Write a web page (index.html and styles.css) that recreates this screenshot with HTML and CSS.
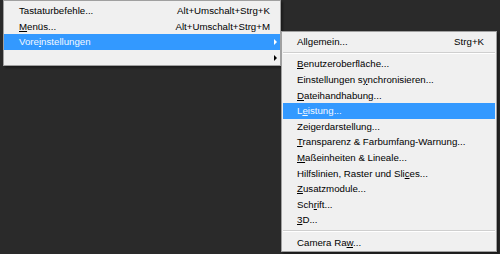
FILE: index.html
```html
<!DOCTYPE html>
<html lang="de">
<head>
<meta charset="utf-8">
<link rel="stylesheet" href="styles.css">
</head>
<body>
<div class="desk">
  <div class="menu main">
    <div class="item"><span class="label">Tastaturbefehle...</span><span class="key">Alt+Umschalt+Strg+K</span><span class="sub"></span></div>
    <div class="item"><span class="label"><u>M</u>enüs...</span><span class="key">Alt+Umschalt+Strg+M</span><span class="sub"></span></div>
    <div class="item active"><span class="label">Vore<u>i</u>nstellungen</span><span class="key"></span><span class="sub"><i class="arrow"></i></span></div>
    <div class="item"><span class="label"></span><span class="key"></span><span class="sub"><i class="arrow"></i></span></div>
  </div>
  <div class="menu flyout">
    <div class="item"><span class="label">Allgemein...</span><span class="key">Strg+K</span></div>
    <div class="sep"></div>
    <div class="item"><span class="label"><u>B</u>enutzeroberfläche...</span></div>
    <div class="item"><span class="label">Einstellungen s<u>y</u>nchronisieren...</span></div>
    <div class="item"><span class="label"><u>D</u>ateihandhabung...</span></div>
    <div class="item active"><span class="label">L<u>e</u>istung...</span></div>
    <div class="item"><span class="label">Zeigerdarstellung...</span></div>
    <div class="item"><span class="label"><u>T</u>ransparenz &amp; Farbumfang-Warnung...</span></div>
    <div class="item"><span class="label"><u>M</u>aßeinheiten &amp; Lineale...</span></div>
    <div class="item"><span class="label">Hilfslinien, Raster und Sli<u>c</u>es...</span></div>
    <div class="item"><span class="label"><u>Z</u>usatzmodule...</span></div>
    <div class="item"><span class="label">Sch<u>r</u>ift...</span></div>
    <div class="item"><span class="label"><u>3</u>D...</span></div>
    <div class="sep"></div>
    <div class="item"><span class="label">Camera Ra<u>w</u>...</span></div>
  </div>
</div>
</body>
</html>
```
FILE: styles.css
```css
html, body {
  margin: 0;
  padding: 0;
  background: #2a2a2a;
  width: 500px;
  height: 254px;
  overflow: hidden;
}
.desk {
  display: flex;
  align-items: flex-start;
  font-family: "Liberation Sans", Arial, sans-serif;
  font-size: 9.7px;
  color: #000;
}
.menu {
  box-sizing: border-box;
  background: #f0f0f0;
  border: 1px solid #a0a0a0;
  box-shadow: 2px 2px 2px rgba(0,0,0,0.35);
}
.main {
  width: 278px;
  margin-left: 3px;
  padding: 2px 0 0 0;
}
.flyout {
  width: 216px;
  margin-top: 31px;
  padding: 2px 1px 1px 1px;
}
.item {
  height: 15.6px;
  display: grid;
  align-items: center;
  white-space: nowrap;
}
.main .item {
  grid-template-columns: 1fr auto 10px;
  padding-left: 15px;
}
.flyout .item {
  grid-template-columns: 1fr auto;
  padding: 0 11px 0 14px;
}
.item u {
  text-underline-offset: 1px;
}
.active {
  background: #3399ff;
  color: #f2f8ff;
}
.sub {
  display: flex;
  justify-content: center;
  align-items: center;
}
.arrow {
  display: block;
  width: 0;
  height: 0;
  border-left: 3px solid #000;
  border-top: 3px solid transparent;
  border-bottom: 3px solid transparent;
}
.active .arrow {
  border-left-color: #fff;
}
.sep {
  height: 6.6px;
  box-sizing: border-box;
  padding-top: 2px;
}
.sep::before {
  content: "";
  display: block;
  height: 1px;
  background: #cfcfcf;
  border-bottom: 1px solid #ffffff;
}
```
